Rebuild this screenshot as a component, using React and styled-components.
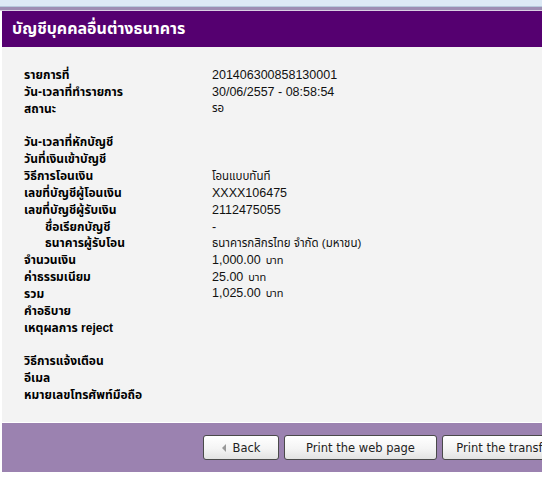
import React from "react";
import styled, { createGlobalStyle } from "styled-components";

const Global = createGlobalStyle`
  html, body { margin: 0; padding: 0; background: #ffffff; }
  body { font-family: "Liberation Sans", "Noto Sans Thai", "Noto Sans", sans-serif; overflow: hidden; }
`;

const Page = styled.div`
  width: 542px;
  height: 480px;
  padding-left: 2px;
  box-sizing: border-box;
  overflow: hidden;
  background: #ffffff;
`;

const TopStrip = styled.div`
  height: 6px;
  background: #dce9f5;
  border-bottom: 1px solid #b7c9dc;
  margin-left: -2px;
`;

const AccentLine = styled.div`
  height: 3px;
  background: #9d8db3;
  border-bottom: 1px solid #d9cfe3;
  margin-left: -2px;
`;

const Header = styled.div`
  height: 36px;
  background: #550070;
  color: #ffffff;
  display: flex;
  align-items: center;
  padding-left: 10px;
  font-size: 16px;
  font-weight: bold;
`;

const Content = styled.div`
  background: #f3f3f3;
  padding: 19px 0 19px 22px;
  height: 375px;
  box-sizing: border-box;
`;

const Row = styled.div`
  display: grid;
  grid-template-columns: 188px 1fr;
  height: 16.85px;
  align-items: center;
  font-size: 12px;
  color: #000;
`;

const Label = styled.div`
  font-weight: bold;
  padding-left: ${(p) => (p.$indent ? "21px" : "0")};
  white-space: nowrap;
`;

const Value = styled.div`
  font-size: ${(p) => (p.$thai ? "11.5px" : "12.5px")};
  color: #111;
  white-space: nowrap;
`;

const Unit = styled.span`
  font-size: 11px;
  margin-left: 5px;
`;

const Spacer = styled.div`
  height: 16.85px;
`;

const Footer = styled.div`
  height: 49px;
  margin-top: 1px;
  background: #9b82b0;
  display: flex;
  align-items: center;
  gap: 5px;
  padding-left: 201px;
`;

const Button = styled.button`
  flex: none;
  width: ${(p) => p.$w}px;
  height: 25px;
  border: 1px solid #4a4a4a;
  border-radius: 3px;
  background: linear-gradient(#ffffff, #f4f4f4 55%, #e2e2e2);
  font-family: "DejaVu Sans", Verdana, sans-serif;
  font-size: 11.5px;
  color: #222;
  display: flex;
  align-items: center;
  justify-content: center;
  gap: 7px;
  padding: 0;
  white-space: nowrap;
`;

const Arrow = styled.span`
  width: 0;
  height: 0;
  border-top: 4px solid transparent;
  border-bottom: 4px solid transparent;
  border-right: 4px solid #999;
`;

const rows = [
  ["รายการที่", "201406300858130001"],
  ["วัน-เวลาที่ทำรายการ", "30/06/2557 - 08:58:54"],
  ["สถานะ", "รอ", false, true],
  null,
  ["วัน-เวลาที่หักบัญชี", ""],
  ["วันที่เงินเข้าบัญชี", ""],
  ["วิธีการโอนเงิน", "โอนแบบทันที", false, true],
  ["เลขที่บัญชีผู้โอนเงิน", "XXXX106475"],
  ["เลขที่บัญชีผู้รับเงิน", "2112475055"],
  ["ชื่อเรียกบัญชี", "-", true],
  ["ธนาคารผู้รับโอน", "ธนาคารกสิกรไทย จำกัด (มหาชน)", true, true],
  ["จำนวนเงิน", "1,000.00", false, false, true],
  ["ค่าธรรมเนียม", "25.00", false, false, true],
  ["รวม", "1,025.00", false, false, true],
  ["คำอธิบาย", ""],
  ["เหตุผลการ reject", ""],
  null,
  ["วิธีการแจ้งเตือน", ""],
  ["อีเมล", ""],
  ["หมายเลขโทรศัพท์มือถือ", ""],
];

export default function App() {
  return (
    <Page>
      <Global />
      <TopStrip />
      <AccentLine />
      <Header>บัญชีบุคคลอื่นต่างธนาคาร</Header>
      <Content>
        {rows.map((r, i) =>
          r === null ? (
            <Spacer key={i} />
          ) : (
            <Row key={i}>
              <Label $indent={r[2]}>{r[0]}</Label>
              <Value $thai={r[3]}>
                {r[1]}
                {r[4] && <Unit>บาท</Unit>}
              </Value>
            </Row>
          )
        )}
      </Content>
      <Footer>
        <Button $w={76}>
          <Arrow />
          Back
        </Button>
        <Button $w={153}>Print the web page</Button>
        <Button $w={150}>Print the transfer slip</Button>
      </Footer>
    </Page>
  );
}
